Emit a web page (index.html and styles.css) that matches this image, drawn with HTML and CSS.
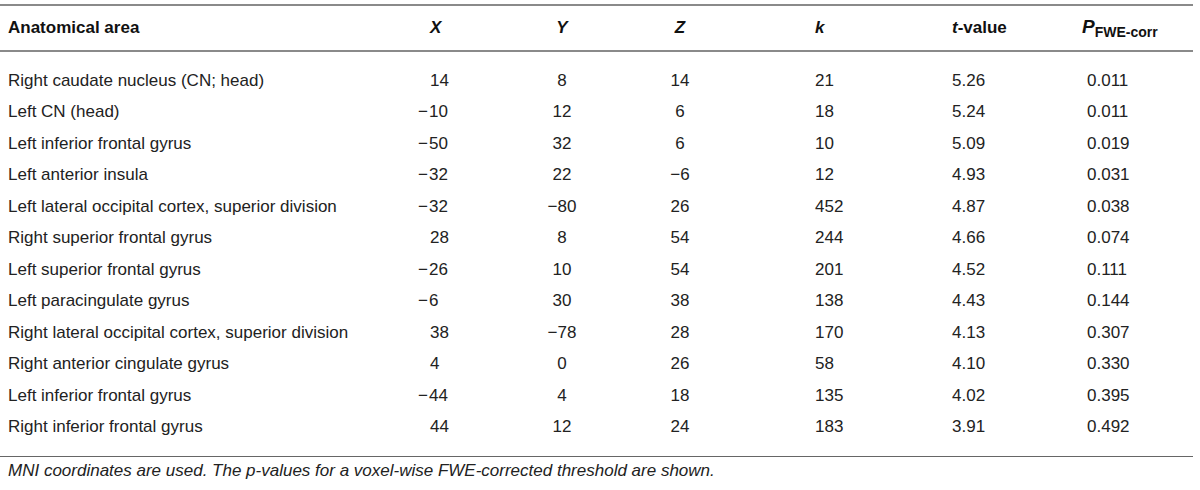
FILE: index.html
```html
<!DOCTYPE html>
<html lang="en">
<head>
    <meta charset="UTF-8">
    <title>Table</title>
    <link rel="stylesheet" href="styles.css">
</head>
<body>
    <div class="table-wrap">
        <table class="results">
            <colgroup>
                <col class="c-area">
                <col class="c-x">
                <col class="c-y">
                <col class="c-z">
                <col class="c-k">
                <col class="c-t">
                <col class="c-p">
            </colgroup>
            <thead>
                <tr>
                    <th class="area">Anatomical area</th>
                    <th class="x"><i>X</i></th>
                    <th class="mid"><i>Y</i></th>
                    <th class="mid"><i>Z</i></th>
                    <th class="k"><i>k</i></th>
                    <th class="t"><i>t</i>-value</th>
                    <th class="p"><i class="big">P</i><sub>FWE-corr</sub></th>
                </tr>
            </thead>
            <tbody>
                <tr><td class="area">Right caudate nucleus (CN; head)</td><td class="x">14</td><td class="mid">8</td><td class="mid">14</td><td class="k">21</td><td class="t">5.26</td><td class="p">0.011</td></tr>
                <tr><td class="area">Left CN (head)</td><td class="x"><span class="neg">−</span>10</td><td class="mid">12</td><td class="mid">6</td><td class="k">18</td><td class="t">5.24</td><td class="p">0.011</td></tr>
                <tr><td class="area">Left inferior frontal gyrus</td><td class="x"><span class="neg">−</span>50</td><td class="mid">32</td><td class="mid">6</td><td class="k">10</td><td class="t">5.09</td><td class="p">0.019</td></tr>
                <tr><td class="area">Left anterior insula</td><td class="x"><span class="neg">−</span>32</td><td class="mid">22</td><td class="mid">−6</td><td class="k">12</td><td class="t">4.93</td><td class="p">0.031</td></tr>
                <tr><td class="area">Left lateral occipital cortex, superior division</td><td class="x"><span class="neg">−</span>32</td><td class="mid">−80</td><td class="mid">26</td><td class="k">452</td><td class="t">4.87</td><td class="p">0.038</td></tr>
                <tr><td class="area">Right superior frontal gyrus</td><td class="x">28</td><td class="mid">8</td><td class="mid">54</td><td class="k">244</td><td class="t">4.66</td><td class="p">0.074</td></tr>
                <tr><td class="area">Left superior frontal gyrus</td><td class="x"><span class="neg">−</span>26</td><td class="mid">10</td><td class="mid">54</td><td class="k">201</td><td class="t">4.52</td><td class="p">0.111</td></tr>
                <tr><td class="area">Left paracingulate gyrus</td><td class="x"><span class="neg">−</span>6</td><td class="mid">30</td><td class="mid">38</td><td class="k">138</td><td class="t">4.43</td><td class="p">0.144</td></tr>
                <tr><td class="area">Right lateral occipital cortex, superior division</td><td class="x">38</td><td class="mid">−78</td><td class="mid">28</td><td class="k">170</td><td class="t">4.13</td><td class="p">0.307</td></tr>
                <tr><td class="area">Right anterior cingulate gyrus</td><td class="x">4</td><td class="mid">0</td><td class="mid">26</td><td class="k">58</td><td class="t">4.10</td><td class="p">0.330</td></tr>
                <tr><td class="area">Left inferior frontal gyrus</td><td class="x"><span class="neg">−</span>44</td><td class="mid">4</td><td class="mid">18</td><td class="k">135</td><td class="t">4.02</td><td class="p">0.395</td></tr>
                <tr><td class="area">Right inferior frontal gyrus</td><td class="x">44</td><td class="mid">12</td><td class="mid">24</td><td class="k">183</td><td class="t">3.91</td><td class="p">0.492</td></tr>
            </tbody>
        </table>
        <p class="note">MNI coordinates are used. The p-values for a voxel-wise FWE-corrected threshold are shown.</p>
    </div>
</body>
</html>
```

FILE: styles.css
```css
body {
    margin: 0;
    background-color: #ffffff;
    font-family: "Liberation Sans", Arial, sans-serif;
    color: #222;
}

.table-wrap {
    width: 1193px;
    padding-top: 4px;
}

.results {
    width: 1193px;
    border-collapse: collapse;
    table-layout: fixed;
    font-size: 17px;
}

.c-area { width: 419px; }
.c-x { width: 81px; }
.c-y { width: 124px; }
.c-z { width: 112px; }
.c-k { width: 216px; }
.c-t { width: 135px; }
.c-p { width: 106px; }

.results thead tr {
    border-top: 2px solid #8a8a8a;
    border-bottom: 2px solid #8a8a8a;
}

.results th {
    height: 44px;
    padding: 0;
    font-weight: bold;
    color: #111;
    text-align: left;
    vertical-align: middle;
}

.results tbody tr:last-child {
    border-bottom: 1px solid #666;
}

.results td {
    height: 31.5px;
    padding: 0;
    vertical-align: middle;
    font-weight: normal;
}

.results tbody tr:first-child td {
    padding-top: 13px;
}

.results tbody tr:last-child td {
    padding-bottom: 13px;
}

.area {
    padding-left: 8px !important;
    text-align: left;
}

.x {
    padding-left: 11px !important;
    text-align: left;
}

.neg {
    margin-left: -12px;
    margin-right: 1px;
}

.mid {
    text-align: center !important;
}

.k {
    padding-left: 79px !important;
}

.p {
    text-align: left;
}

th.p {
    padding-left: 0;
    white-space: nowrap;
}

th.p .big {
    font-size: 19px;
    margin-left: -5px;
}

th.p sub {
    font-size: 14px;
    vertical-align: -4px;
}

.note {
    margin: 4px 0 0 8px;
    font-size: 17px;
    font-style: italic;
    color: #222;
}
```
